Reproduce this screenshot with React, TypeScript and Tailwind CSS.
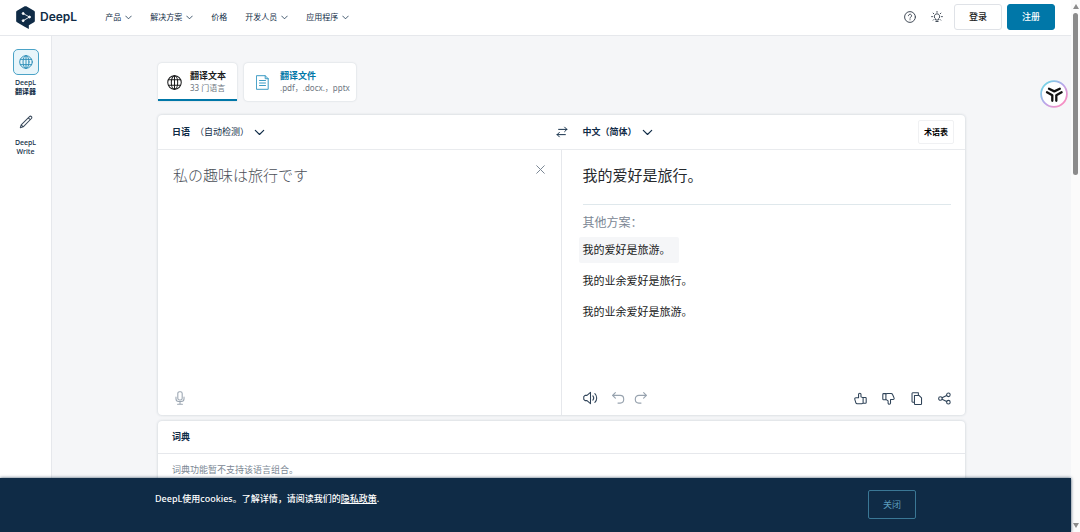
import { useState } from "react";
import type { ReactNode } from "react";

const navItems = [
  { label: "产品", menu: true },
  { label: "解决方案", menu: true },
  { label: "价格", menu: false },
  { label: "开发人员", menu: true },
  { label: "应用程序", menu: true },
];

const alternatives = ["我的爱好是旅游。", "我的业余爱好是旅行。", "我的业余爱好是旅游。"];

type IconProps = { className?: string; box?: string; stroke?: number; children: ReactNode };

function Icon({ className = "", box = "0 0 16 16", stroke = 1.2, children }: IconProps) {
  return (
    <svg
      aria-hidden="true"
      viewBox={box}
      className={`shrink-0 ${className}`}
      fill="none"
      stroke="currentColor"
      strokeWidth={stroke}
      strokeLinecap="round"
      strokeLinejoin="round"
    >
      {children}
    </svg>
  );
}

function Chevron({ className }: { className: string }) {
  return (
    <Icon className={className} box="0 0 12 8" stroke={1.3}>
      <path d="M1.2 1.5 6 6.3l4.8-4.8" />
    </Icon>
  );
}

function Globe({ className }: { className: string }) {
  return (
    <Icon className={className} stroke={1.1}>
      <circle cx="8" cy="8" r="7.2" />
      <ellipse cx="8" cy="8" rx="3.4" ry="7.2" />
      <path d="M8 .8v14.4M1.6 5h12.8M1.6 11h12.8" />
    </Icon>
  );
}

function Logo() {
  return (
    <a href="#" className="flex items-center gap-[5px] text-[#0f2b46]">
      <svg aria-hidden="true" viewBox="0 0 56 69" className="h-[23px] w-[19px]">
        <path
          fill="currentColor"
          d="M25.5 1Q28 0 30.5 1L53.5 14Q56 15.5 56 18V45Q56 47.5 53.5 49L38 58V69L25.5 62L2.5 49Q0 47.5 0 45V18Q0 15.5 2.5 14Z"
        />
        <g fill="#fff" stroke="#fff" strokeWidth="2.6">
          <path fill="none" d="M21 22.5 40 33 21 44" />
          <circle cx="21" cy="22.5" r="3" />
          <circle cx="40" cy="33" r="3" />
          <circle cx="21" cy="44" r="3" />
        </g>
      </svg>
      <span className="font-['Inter',sans-serif] text-[12px] leading-4 font-semibold">DeepL</span>
    </a>
  );
}

function Header() {
  return (
    <header className="flex shrink-0 items-center border-b border-[#e6e8ec] bg-white px-4 pt-1 pb-[5px]">
      <Logo />
      <nav className="ml-7 flex flex-1 items-center gap-[18px] text-[8px] leading-3 text-[#0f2b46]">
        {navItems.map((item) => (
          <a key={item.label} href="#" className="flex items-center gap-1">
            {item.label}
            {item.menu && <Chevron className="h-[5px] w-[7px]" />}
          </a>
        ))}
      </nav>
      <div className="flex items-center gap-[5px]">
        <button aria-label="帮助" className="mr-2.5 text-[#3f4854]">
          <Icon className="size-3" stroke={1.3}>
            <circle cx="8" cy="8" r="7.2" />
            <path d="M5.9 6.3a2.1 2.1 0 1 1 3.2 1.8C8.3 8.6 8 8.9 8 9.6M8 11.6v.2" />
          </Icon>
        </button>
        <button aria-label="提示" className="mr-1.5 text-[#3f4854]">
          <Icon className="size-3" stroke={1.3}>
            <path d="M6.2 11.5v-1a3.6 3.6 0 1 1 3.6 0v1ZM6.5 14h3M8 .6v1.2M2.8 2.8l.9.9M13.2 2.8l-.9.9M.8 7.5H2M14 7.5h1.2M3 12.2l.8-.8M13 12.2l-.8-.8" />
          </Icon>
        </button>
        <button className="rounded-[3px] border border-[#dfe2e7] px-3.5 py-[5px] text-[9px] leading-[14px] font-medium text-[#1b1c1d]">
          登录
        </button>
        <button className="rounded-[3px] border border-[#0077a8] bg-[#0077a8] px-3.5 py-[5px] text-[9px] leading-[14px] font-medium text-white">
          注册
        </button>
      </div>
    </header>
  );
}

function Sidebar() {
  return (
    <aside className="flex w-[52px] shrink-0 flex-col items-center gap-[13px] border-r border-[#e6e8ec] bg-white pt-[13px] text-center text-[7px] leading-[9px] font-medium text-[#0f2b46]">
      <a href="#" className="flex flex-col items-center gap-[3px]">
        <span className="flex size-[26px] items-center justify-center rounded-[5px] border border-[#4ba3c7] bg-[#e8f5fa] text-[#2e8fb8]">
          <Globe className="size-3.5" />
        </span>
        <span>
          DeepL
          <br />
          <span className="font-bold">翻译器</span>
        </span>
      </a>
      <a href="#" className="flex flex-col items-center gap-[3px]">
        <span className="flex size-[26px] items-center justify-center text-[#3a4a5c]">
          <Icon className="size-3.5" stroke={1.2}>
            <path d="M1.500 14.500l1-3.300L12 1.800a1.500 1.500 0 0 1 2.200 2.200L4.800 13.500ZM10.600 3.200l2.200 2.200M2.500 11.200l2.300 2.300" />
          </Icon>
        </span>
        <span>
          DeepL
          <br />
          Write
        </span>
      </a>
    </aside>
  );
}

function ModeTabs() {
  return (
    <div className="flex gap-[7px]">
      <button className="flex items-center gap-2 rounded-[4px] rounded-b-none border-b-2 border-[#0077a8] bg-white pt-0.5 pr-[11px] pl-[9px] text-left shadow-[0_0_2px_rgba(15,43,70,0.2)]">
        <Globe className="size-[15px] text-[#1b1c1d]" />
        <span>
          <span className="block text-[9px] leading-3 font-bold text-[#1b1c1d]">翻译文本</span>
          <span className="block text-[8px] leading-3 text-[#6e7781]">33 门语言</span>
        </span>
      </button>
      <button className="flex h-[38px] items-center gap-[11px] rounded-[4px] bg-white pr-1.5 pl-3 text-left shadow-[0_0_2px_rgba(15,43,70,0.2)]">
        <Icon className="h-[15px] w-[13px] text-[#3d9cc4]" box="0 0 13 15" stroke={1}>
          <path d="M.8.7h8.400l3 3v10.600H.8ZM9.200.7v3h3M3.500 5.500h6M3.500 8h6M3.500 10.500h6" />
        </Icon>
        <span>
          <span className="block text-[9px] leading-3 font-bold text-[#0077a8]">翻译文件</span>
          <span className="block text-[8px] leading-3 text-[#6e7781]">.pdf，.docx.，pptx</span>
        </span>
      </button>
    </div>
  );
}

function Translator() {
  const [source, setSource] = useState("私の趣味は旅行です");
  return (
    <section className="mt-3.5 flex min-h-[300px] flex-col rounded-[4px] bg-white shadow-[0_0_3px_rgba(15,43,70,0.2)]">
      <div className="grid h-[35px] grid-cols-[1fr_12px_1fr] items-center border-b border-[#e9ebee] text-[9px] leading-4 text-[#0f2b46]">
        <button className="flex items-center gap-[5px] pl-3.5">
          <span className="font-bold">日语</span>
          <span>（自动检测）</span>
          <Chevron className="h-[7px] w-[11px]" />
        </button>
        <button aria-label="交换语言">
          <Icon className="size-3" stroke={1.3}>
            <path d="M3.500 4.500h11M11.500 1.500l3 3-3 3M12.500 11.500h-11M4.500 8.500l-3 3 3 3" />
          </Icon>
        </button>
        <div className="flex items-center justify-between pr-[11px] pl-[15px]">
          <button className="flex items-center gap-[5px] font-bold">
            中文（简体）
            <Chevron className="h-[7px] w-[11px]" />
          </button>
          <button className="rounded-[2px] border border-[#f0f1f3] px-[5px] py-[3px] text-[8px] leading-4 font-bold text-black">
            术语表
          </button>
        </div>
      </div>
      <div className="grid flex-1 grid-cols-2">
        <div className="flex flex-col border-r border-[#e6e8ec] pt-[15px] pr-4 pb-2.5 pl-[15px]">
          <div className="flex flex-1 items-start">
            <textarea
              aria-label="原文"
              value={source}
              onChange={(event) => setSource(event.target.value)}
              className="h-full flex-1 resize-none bg-transparent font-['Noto_Sans_CJK_JP',sans-serif] text-[15px] leading-5 font-light text-[#4b5058] outline-none"
            />
            <button aria-label="清除" className="text-[#7b8794]">
              <Icon className="size-[9px]" box="0 0 9 9" stroke={1}>
                <path d="M.7.7l7.600 7.600M8.300.7.7 8.300" />
              </Icon>
            </button>
          </div>
          <button aria-label="语音输入" className="self-start text-[#9aa5b1]">
            <Icon className="size-3.5">
              <rect x="5.500" y=".8" width="5" height="9.400" rx="2" />
              <path d="M3.400 7v1.800a3.200 3.200 0 0 0 3.200 3.200h2.800a3.200 3.200 0 0 0 3.200-3.200V7M8 12v3M5.200 15.200h5.600" />
            </Icon>
          </button>
        </div>
        <div className="flex flex-col pt-[15px] pr-3.5 pb-2.5 pl-[21px]">
          <p className="text-[15px] leading-5 text-[#26292d]">我的爱好是旅行。</p>
          <div className="mt-[19px] border-t border-[#dfe8ec] pt-2.5">
            <h2 className="text-[12px] leading-4 text-[#7b8794]">其他方案：</h2>
            <ul className="mt-1.5 -ml-1 flex flex-col items-start gap-[5px] text-[11px] leading-[18px] text-[#1b1c1d]">
              {alternatives.map((text, index) => (
                <li key={text} className="flex">
                  <button className={`rounded-[2px] py-1 pr-2 pl-1 ${index === 0 ? "bg-[#f5f6f8]" : ""}`}>{text}</button>
                </li>
              ))}
            </ul>
          </div>
          <div className="mt-auto flex items-center text-[#2f4358]">
            <button aria-label="朗读">
              <Icon className="h-3.5 w-[15px]" box="0 0 17 16">
                <path d="M8.500 1.500v13L4.500 11H2.300L.8 9.500v-3L2.300 5h2.200ZM11.200 5.500a4 4 0 0 1 0 5M13.500 3a7 7 0 0 1 0 10" />
              </Icon>
            </button>
            <button aria-label="撤销" className="ml-[13px] text-[#98a3af]">
              <Icon className="size-3.5" stroke={1.3}>
                <path d="M5 1.800 1.800 5 5 8.200M1.800 5h8.700a4 4 0 0 1 4 4v.8a4 4 0 0 1-4 4H8" />
              </Icon>
            </button>
            <button aria-label="重做" className="ml-[9px] text-[#98a3af]">
              <Icon className="size-3.5" stroke={1.3}>
                <path d="M11 1.800 14.200 5 11 8.200M14.200 5H5.500a4 4 0 0 0-4 4v.8a4 4 0 0 0 4 4H8" />
              </Icon>
            </button>
            <div className="ml-auto flex items-center gap-[15px]">
              <button aria-label="赞">
                <Icon className="size-[13px]" stroke={1.3}>
                  <path d="M11.200 6.800h2.800a1 1 0 0 1 1 1v5a1 1 0 0 1-1 1h-2.800ZM11.200 7 8.600 6V3a1.500 1.500 0 0 0-3 0v4L2.500 7A1.500 1.500 0 0 0 1 9l1.200 4a2 2 0 0 0 2 1.500h5.300l1.700-.8" />
                </Icon>
              </button>
              <button aria-label="踩">
                <Icon className="size-[13px]" stroke={1.3}>
                  <path d="M4.800 2H2a1 1 0 0 0-1 1v5.500a1 1 0 0 0 1 1h2.800ZM4.800 2.300 6.500 1.800H11a2 2 0 0 1 2 1.300l1.800 4A1.400 1.400 0 0 1 13.500 9.200h-3v4.300a1.500 1.500 0 0 1-3 0V11L4.800 9" />
                </Icon>
              </button>
              <button aria-label="复制">
                <Icon className="size-[13px]" stroke={1.3}>
                  <path d="M5.500 4.200h5.500l3.200 3v7.300a.8.8 0 0 1-.8.800H6.300a.8.8 0 0 1-.8-.8ZM5.500 12.500H3.300a.8.8 0 0 1-.8-.8V1.800A.8.8 0 0 1 3.300 1h7v3" />
                </Icon>
              </button>
              <button aria-label="分享">
                <Icon className="size-[13px]" stroke={1.3}>
                  <circle cx="3" cy="8" r="2.200" />
                  <circle cx="12.800" cy="3.500" r="2.200" />
                  <circle cx="12.800" cy="12.500" r="2.200" />
                  <path d="M5 7.100l5.700-2.700M5 8.900l5.700 2.700" />
                </Icon>
              </button>
            </div>
          </div>
        </div>
      </div>
    </section>
  );
}

function Dictionary() {
  return (
    <section className="mt-1.5 rounded-[4px] bg-white text-[9px] shadow-[0_0_3px_rgba(15,43,70,0.2)]">
      <h2 className="border-b border-[#e6e8ec] px-3.5 py-2 leading-4 font-bold text-[#0f2b46]">词典</h2>
      <p className="px-3.5 pt-2 pb-6 leading-4 text-[#7b8794]">词典功能暂不支持该语言组合。</p>
    </section>
  );
}

function CookieBanner() {
  return (
    <div className="relative shrink-0 bg-[#0f2b46] px-6 pt-3 pb-[13px] shadow-[0_0_3px_rgba(15,43,70,0.8)]">
      <div className="mx-auto flex max-w-[761px] items-start justify-between">
        <p className="pt-0.5 text-[9px] leading-[14px] font-medium text-white">
          DeepL使用cookies。了解详情，请阅读我们的
          <a href="#" className="underline">
            隐私政策
          </a>
          .
        </p>
        <button className="rounded-[2px] border border-[#3a7795] px-3.5 py-1.5 text-[9px] leading-[15px] text-[#5c9dbd]">
          关闭
        </button>
      </div>
    </div>
  );
}

function FloatingBadge() {
  return (
    <button aria-label="助手" className="absolute top-20 right-[3px]">
      <svg aria-hidden="true" viewBox="0 0 28 28" className="size-7">
        <defs>
          <linearGradient id="ring" x1="0" y1="0" x2="1" y2="1">
            <stop offset="0.15" stopColor="#7ad0e6" />
            <stop offset="0.5" stopColor="#b9a5ea" />
            <stop offset="0.85" stopColor="#f58fc4" />
          </linearGradient>
        </defs>
        <circle cx="14" cy="14" r="12.9" fill="#fff" stroke="url(#ring)" strokeWidth="1.8" />
        <path
          fill="none"
          stroke="#111"
          strokeWidth="2.3"
          strokeLinecap="round"
          strokeLinejoin="round"
          d="M9 8.800l5.300 2.600L19.800 8.800M7 12.300l5.300 3v5.500M21.600 12.300l-5.300 3v5.500"
        />
      </svg>
    </button>
  );
}

function Scrollbar() {
  return (
    <div aria-hidden="true" className="flex w-[9px] shrink-0 flex-col items-center bg-[#fbfbfb] py-1">
      <svg viewBox="0 0 6 5" className="h-[5px] w-1.5">
        <path d="M3 0 6 5H0Z" fill="#8b8b8b" />
      </svg>
      <div className="mt-1 h-[31%] w-[5px] rounded-full bg-[#8b8b8b]" />
      <svg viewBox="0 0 6 5" className="mt-auto h-[5px] w-1.5">
        <path d="M3 5 6 0H0Z" fill="#8b8b8b" />
      </svg>
    </div>
  );
}

export default function App() {
  return (
    <div className="flex h-screen bg-[#f5f6f8] font-['Noto_Sans','Noto_Sans_CJK_SC',sans-serif]">
      <div className="relative flex min-w-0 flex-1 flex-col">
        <Header />
        <div className="flex min-h-0 flex-1 overflow-hidden">
          <Sidebar />
          <main className="min-w-0 flex-1 px-6 pt-[27px]">
            <div className="mx-auto max-w-[807px]">
              <ModeTabs />
              <Translator />
              <Dictionary />
            </div>
          </main>
        </div>
        <CookieBanner />
        <FloatingBadge />
      </div>
      <Scrollbar />
    </div>
  );
}
